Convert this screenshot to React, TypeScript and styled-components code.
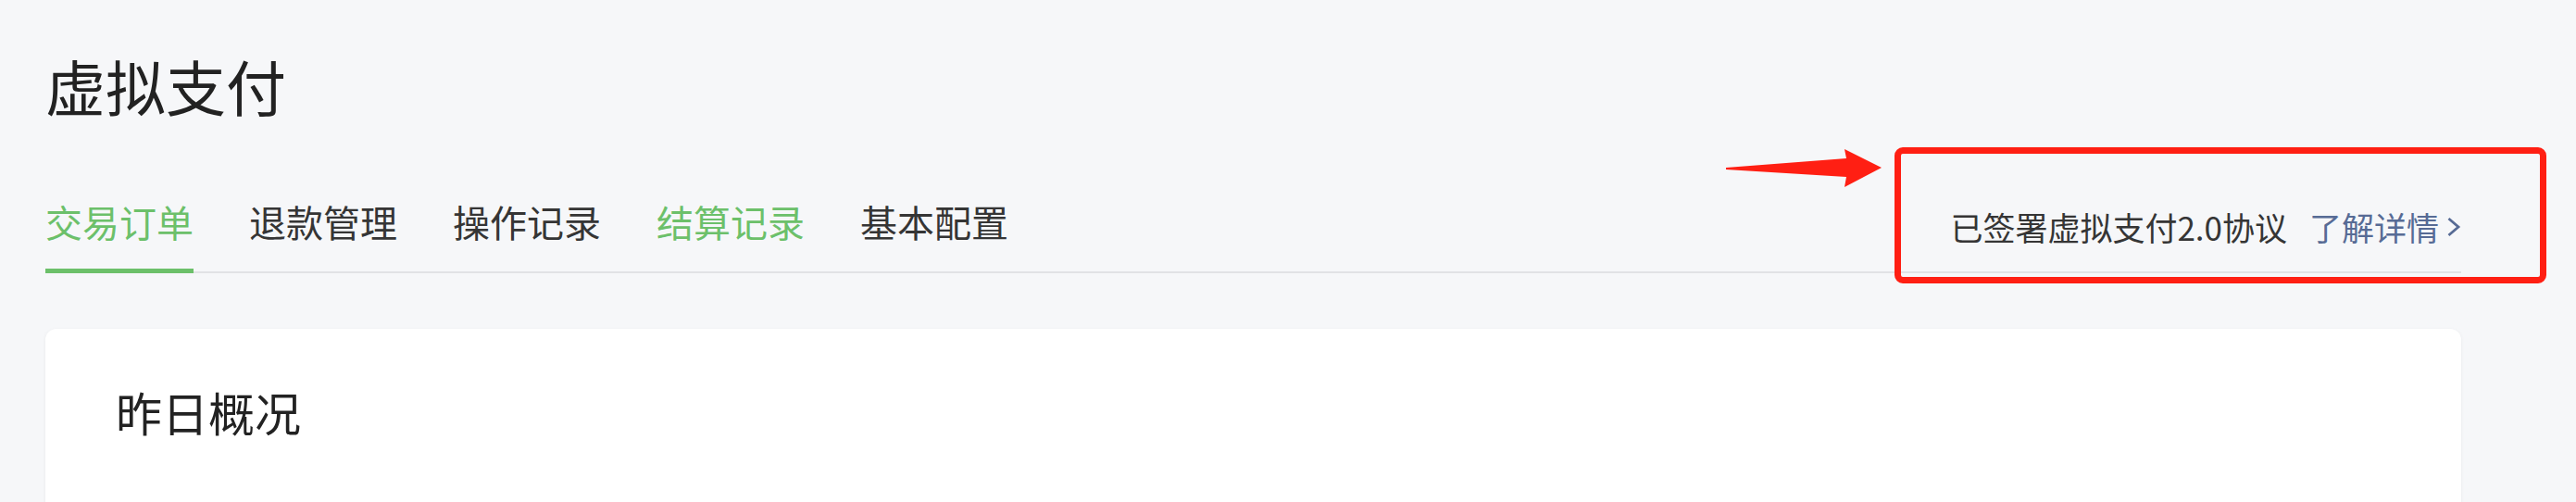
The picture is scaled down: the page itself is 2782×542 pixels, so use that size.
import styled, { createGlobalStyle } from "styled-components";

const tabs = [
  { label: "交易订单", active: true },
  { label: "退款管理" },
  { label: "操作记录" },
  { label: "结算记录", highlighted: true },
  { label: "基本配置" },
];

function App() {
  return (
    <Page>
      <GlobalStyle />
      <Title>虚拟支付</Title>

      <TabBar>
        <TabList>
          {tabs.map((tab) => (
            <Tab key={tab.label} $active={tab.active} $green={tab.active || tab.highlighted}>
              {tab.label}
            </Tab>
          ))}
        </TabList>
        <Agreement>
          已签署虚拟支付2.0协议
          <DetailLink href="#">
            了解详情
            <svg width="16" height="22" viewBox="0 0 16 22">
              <polyline points="2.5,2 13,11 2.5,20" fill="none" stroke="#576b95" strokeWidth="2.8" />
            </svg>
          </DetailLink>
        </Agreement>
      </TabBar>

      <Card>
        <CardTitle>昨日概况</CardTitle>
      </Card>

      <Arrow width="172" height="44" viewBox="0 0 172 44">
        <polygon points="0,20 130,10 128,0 168,20 128,41 130,30 0,22" fill="#ff1f13" />
      </Arrow>
      <HighlightBox />
    </Page>
  );
}

const GlobalStyle = createGlobalStyle`
  html, body {
    margin: 0;
    background: #f6f7f9;
  }
  body {
    font-family: "Noto Sans CJK SC", "Noto Sans", sans-serif;
  }
`;

const Page = styled.div`
  position: relative;
  box-sizing: border-box;
  width: 2782px;
  height: 542px;
  overflow: hidden;
  padding: 60px 124px 0 49px;
  background: #f6f7f9;
`;

const Title = styled.h1`
  margin: 0;
  font-size: 65px;
  line-height: 1;
  font-weight: 400;
  color: #222222;
`;

const TabBar = styled.div`
  display: flex;
  align-items: flex-end;
  justify-content: space-between;
  margin-top: 94px;
  border-bottom: 2px solid #e1e2e5;
`;

const TabList = styled.div`
  display: flex;
  gap: 60px;
`;

const Tab = styled.div<{ $active?: boolean; $green?: boolean }>`
  font-size: 40px;
  line-height: 1;
  padding-bottom: 31px;
  margin-bottom: -2px;
  color: ${({ $green }) => ($green ? "#6cc06a" : "#353535")};
  border-bottom: 5px solid ${({ $active }) => ($active ? "#6cc06a" : "transparent")};
`;

const Agreement = styled.div`
  display: flex;
  align-items: center;
  gap: 24px;
  font-size: 35px;
  line-height: 1;
  color: #353535;
  padding-bottom: 31px;
`;

const DetailLink = styled.a`
  display: flex;
  align-items: center;
  gap: 8px;
  color: #576b95;
  text-decoration: none;
`;

const Card = styled.div`
  margin-top: 60px;
  height: 400px;
  box-sizing: border-box;
  padding: 64px 76px;
  background: #ffffff;
  border-radius: 12px;
  box-shadow: 0 1px 4px rgba(0, 0, 0, 0.06);
`;

const CardTitle = styled.h2`
  margin: 0;
  font-size: 50px;
  line-height: 1;
  font-weight: 400;
  color: #222222;
`;

const Arrow = styled.svg`
  position: absolute;
  left: 1864px;
  top: 161px;
`;

const HighlightBox = styled.div`
  position: absolute;
  left: 2046px;
  top: 159px;
  width: 704px;
  height: 147px;
  box-sizing: border-box;
  border: 7px solid #ff1f13;
  border-radius: 9px;
`;

export default App;
